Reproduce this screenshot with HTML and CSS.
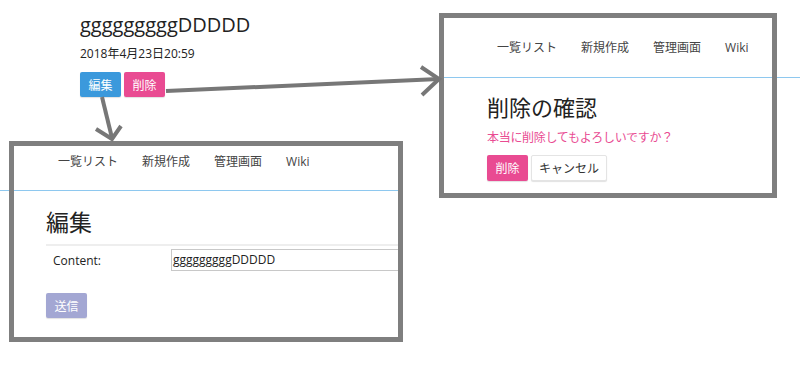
FILE: index.html
```html
<!DOCTYPE html>
<html lang="ja">
<head>
<meta charset="utf-8">
<title>編集と削除</title>
<link rel="stylesheet" href="styles.css">
</head>
<body>
<div class="canvas">
  <div class="post">
    <h1 class="post-title">gggggggggDDDDD</h1>
    <div class="post-date">2018年4月23日20:59</div>
    <div class="btn-row">
      <span class="btn btn-blue">編集</span>
      <span class="btn btn-pink">削除</span>
    </div>
  </div>

  <div class="ext-line ext-left"></div>
  <div class="ext-line ext-right"></div>

  <div class="window win-edit">
    <nav class="nav nav-edit">
      <span>一覧リスト</span><span>新規作成</span><span>管理画面</span><span>Wiki</span>
    </nav>
    <div class="main main-edit">
      <h2 class="heading">編集</h2>
      <div class="form-row">
        <label class="label">Content:</label>
        <div class="input">gggggggggDDDDD</div>
      </div>
      <span class="btn btn-submit">送信</span>
    </div>
  </div>

  <div class="window win-delete">
    <nav class="nav nav-delete">
      <span>一覧リスト</span><span>新規作成</span><span>管理画面</span><span>Wiki</span>
    </nav>
    <div class="main main-delete">
      <h2 class="heading heading-del">削除の確認</h2>
      <p class="warn">本当に削除してもよろしいですか？</p>
      <div class="btn-row2">
        <span class="btn btn-pink btn-del">削除</span>
        <span class="btn btn-white">キャンセル</span>
      </div>
    </div>
  </div>

  <svg class="arrows" width="800" height="365" viewBox="0 0 800 365">
    <g fill="none" stroke="#777" stroke-width="4" stroke-linecap="butt" stroke-linejoin="miter">
      <line x1="166" y1="91" x2="439" y2="79"/>
      <polyline points="421,67 439,79 422,95"/>
      <line x1="102" y1="97" x2="112" y2="138"/>
      <polyline points="96,129 112,139 121,126"/>
    </g>
  </svg>
</div>
</body>
</html>
```
FILE: styles.css
```css
* { box-sizing: border-box; }
html, body { margin: 0; padding: 0; background: #fff; }
body {
  font-family: "Open Sans", "Noto Sans CJK JP", sans-serif;
  color: #222;
}
.canvas {
  position: relative;
  width: 800px;
  height: 365px;
  overflow: hidden;
  background: #fff;
}
.post {
  position: absolute;
  left: 80px;
  top: 12px;
}
.post-title {
  margin: 0;
  font-size: 20px;
  line-height: 26px;
  font-weight: 400;
  color: #222;
}
.post-date {
  margin-top: 8px;
  font-size: 12px;
  line-height: 16px;
  color: #222;
}
.btn-row {
  margin-top: 10px;
  display: flex;
  gap: 3px;
}
.btn {
  display: inline-flex;
  align-items: center;
  justify-content: center;
  height: 25px;
  padding: 0 4px;
  font-size: 12px;
  color: #fff;
  border-radius: 2px;
  white-space: nowrap;
  box-shadow: 0 1px 1px rgba(0,0,0,0.12);
}
.btn-blue { background: #3b99dc; width: 41px; }
.btn-pink { background: #e94b92; width: 41px; }
.btn-submit { background: #a3a7d3; width: 41px; margin-top: 22px; }
.btn-white {
  background: #fff;
  color: #333;
  border: 1px solid #e4e4e4;
  width: 76px;
  height: 26px;
}
.btn-del { height: 26px; }

.ext-line {
  position: absolute;
  height: 1px;
  background: #8ec8ef;
}
.ext-left { left: 0; top: 190px; width: 12px; }
.ext-right { left: 772px; top: 77px; width: 28px; }

.window {
  position: absolute;
  border: 5px solid #7f7f7f;
  background: #fff;
  overflow: hidden;
}
.win-edit { left: 9px; top: 141px; width: 394px; height: 201px; }
.win-delete { left: 439px; top: 13px; width: 338px; height: 185px; }

.nav {
  display: flex;
  gap: 24px;
  font-size: 12px;
  line-height: 16px;
  color: #444;
  border-bottom: 1px solid #8ec8ef;
  white-space: nowrap;
}
.nav-edit { height: 45px; padding: 8px 0 0 44px; }
.nav-delete { height: 60px; padding: 22px 0 0 53px; }

.main-edit { padding-left: 32px; }
.heading {
  margin: 16px 0 0;
  font-size: 23px;
  line-height: 30px;
  font-weight: 400;
  color: #222;
}
.form-row {
  margin-top: 7px;
  border-top: 2px solid #eee;
  display: flex;
  align-items: center;
  padding-top: 3px;
}
.label {
  flex: none;
  width: 125px;
  padding-left: 7px;
  font-size: 12px;
  color: #222;
}
.input {
  flex: none;
  width: 300px;
  height: 22px;
  border: 1px solid #c8c8c8;
  font-size: 12px;
  line-height: 20px;
  padding-left: 1px;
  color: #222;
}

.main-delete { padding-left: 43px; }
.heading-del {
  margin-top: 15px;
  font-size: 22px;
  line-height: 28px;
}
.warn {
  margin: 9px 0 0;
  font-size: 12px;
  line-height: 16px;
  color: #e94b92;
  letter-spacing: -0.3px;
}
.btn-row2 {
  margin-top: 9px;
  display: flex;
  gap: 3px;
}

.arrows {
  position: absolute;
  left: 0;
  top: 0;
  pointer-events: none;
}
```
